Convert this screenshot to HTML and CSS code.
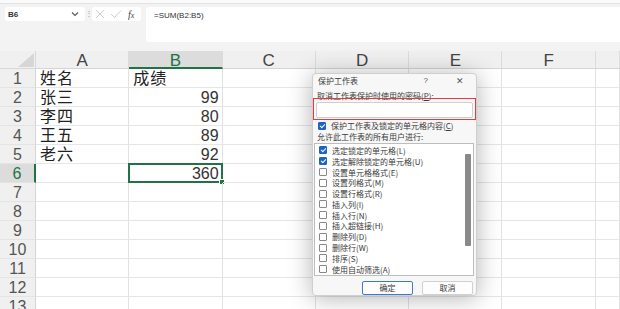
FILE: index.html
```html
<!DOCTYPE html>
<html lang="zh-CN">
<head>
    <meta charset="utf-8">
    <title>保护工作表</title>
    <link rel="stylesheet" href="styles.css">
</head>
<body>
    <div class="ribbon-edge"></div>
    <div class="formula-bar">
        <div class="name-box">
            <span>B6</span>
            <svg width="8" height="6" viewBox="0 0 8 6"><path d="M1 1.5 L4 4.5 L7 1.5" fill="none" stroke="#555" stroke-width="1.1"/></svg>
        </div>
        <div class="dots">⋮</div>
        <div class="fx-box">
            <svg width="10" height="10" viewBox="0 0 10 10"><path d="M1 1 L9 9 M9 1 L1 9" stroke="#c8c8c8" stroke-width="0.9"/></svg>
            <svg width="12" height="10" viewBox="0 0 12 10"><path d="M1 5 L4.5 8.5 L11 1.5" fill="none" stroke="#c8c8c8" stroke-width="0.9"/></svg>
            <span class="fx"><i>f</i><i>x</i></span>
        </div>
        <div class="formula-input">=SUM(B2:B5)</div>
    </div>

    <div class="sheet">
        <div class="corner"><svg width="30" height="14" viewBox="0 0 30 14"><path d="M30 0 L30 14 L14 14 Z" fill="#d6d6d6"/></svg></div>
        <div class="col-head">A</div>
        <div class="col-head active">B</div>
        <div class="col-head">C</div>
        <div class="col-head">D</div>
        <div class="col-head">E</div>
        <div class="col-head">F</div>
        <div class="col-head"></div>

        <div class="row-head">1</div>
        <div class="cell">姓名</div><div class="cell">成绩</div><div class="cell"></div><div class="cell"></div><div class="cell"></div><div class="cell"></div><div class="cell"></div>
        <div class="row-head">2</div>
        <div class="cell">张三</div><div class="cell num">99</div><div class="cell"></div><div class="cell"></div><div class="cell"></div><div class="cell"></div><div class="cell"></div>
        <div class="row-head">3</div>
        <div class="cell">李四</div><div class="cell num">80</div><div class="cell"></div><div class="cell"></div><div class="cell"></div><div class="cell"></div><div class="cell"></div>
        <div class="row-head">4</div>
        <div class="cell">王五</div><div class="cell num">89</div><div class="cell"></div><div class="cell"></div><div class="cell"></div><div class="cell"></div><div class="cell"></div>
        <div class="row-head">5</div>
        <div class="cell">老六</div><div class="cell num">92</div><div class="cell"></div><div class="cell"></div><div class="cell"></div><div class="cell"></div><div class="cell"></div>
        <div class="row-head active">6</div>
        <div class="cell"></div><div class="cell num selected">360<span class="handle"></span></div><div class="cell"></div><div class="cell"></div><div class="cell"></div><div class="cell"></div><div class="cell"></div>
        <div class="row-head">7</div>
        <div class="cell"></div><div class="cell"></div><div class="cell"></div><div class="cell"></div><div class="cell"></div><div class="cell"></div><div class="cell"></div>
        <div class="row-head">8</div>
        <div class="cell"></div><div class="cell"></div><div class="cell"></div><div class="cell"></div><div class="cell"></div><div class="cell"></div><div class="cell"></div>
        <div class="row-head">9</div>
        <div class="cell"></div><div class="cell"></div><div class="cell"></div><div class="cell"></div><div class="cell"></div><div class="cell"></div><div class="cell"></div>
        <div class="row-head">10</div>
        <div class="cell"></div><div class="cell"></div><div class="cell"></div><div class="cell"></div><div class="cell"></div><div class="cell"></div><div class="cell"></div>
        <div class="row-head">11</div>
        <div class="cell"></div><div class="cell"></div><div class="cell"></div><div class="cell"></div><div class="cell"></div><div class="cell"></div><div class="cell"></div>
        <div class="row-head">12</div>
        <div class="cell"></div><div class="cell"></div><div class="cell"></div><div class="cell"></div><div class="cell"></div><div class="cell"></div><div class="cell"></div>
        <div class="row-head">13</div>
        <div class="cell"></div><div class="cell"></div><div class="cell"></div><div class="cell"></div><div class="cell"></div><div class="cell"></div><div class="cell"></div>
    </div>

    <div class="dialog">
        <div class="dialog-title">
            <span>保护工作表</span>
            <span class="title-btns"><span>?</span><span class="close">✕</span></span>
        </div>
        <div class="label">取消工作表保护时使用的密码(<u>P</u>):</div>
        <div class="password"></div>
        <div class="check-row"><span class="box checked"></span>保护工作表及锁定的单元格内容(<u>C</u>)</div>
        <div class="label">允许此工作表的所有用户进行:</div>
        <div class="list">
            <div class="items">
                <div class="item"><span class="box checked"></span>选定锁定的单元格(L)</div>
                <div class="item"><span class="box checked"></span>选定解除锁定的单元格(U)</div>
                <div class="item"><span class="box"></span>设置单元格格式(E)</div>
                <div class="item"><span class="box"></span>设置列格式(M)</div>
                <div class="item"><span class="box"></span>设置行格式(R)</div>
                <div class="item"><span class="box"></span>插入列(I)</div>
                <div class="item"><span class="box"></span>插入行(N)</div>
                <div class="item"><span class="box"></span>插入超链接(H)</div>
                <div class="item"><span class="box"></span>删除列(D)</div>
                <div class="item"><span class="box"></span>删除行(W)</div>
                <div class="item"><span class="box"></span>排序(S)</div>
                <div class="item"><span class="box"></span>使用自动筛选(A)</div>
                <div class="item"><span class="box"></span>使用数据透视表和数据透视图(P)</div>
            </div>
            <div class="scroll"><div class="thumb"></div></div>
        </div>
        <div class="buttons">
            <div class="btn primary">确定</div>
            <div class="btn">取消</div>
        </div>
        <div class="highlight"></div>
    </div>
</body>
</html>
```

FILE: styles.css
```css
body {
    margin: 0;
    width: 620px;
    height: 309px;
    overflow: hidden;
    background-color: #f3f3f3;
    font-family: "Liberation Sans", "Noto Sans CJK SC", sans-serif;
    color: #222;
    position: relative;
}
.ribbon-edge {
    height: 3px;
    background: #fafafa;
    border-bottom: 1px solid #e2e2e2;
}
.formula-bar {
    display: flex;
    align-items: flex-start;
    height: 39px;
    padding-top: 3px;
    padding-left: 5px;
}
.name-box {
    width: 80px;
    height: 14px;
    box-sizing: border-box;
    background: #fff;
    border-radius: 3px;
    display: flex;
    align-items: center;
    justify-content: space-between;
    padding: 0 6px 0 3px;
    font-size: 8px;
    font-weight: bold;
    color: #333;
}
.dots {
    width: 7px;
    font-size: 8px;
    line-height: 14px;
    color: #999;
    text-align: center;
}
.fx-box {
    width: 49px;
    height: 14px;
    box-sizing: border-box;
    background: #fff;
    border-radius: 3px;
    display: flex;
    align-items: center;
    gap: 5px;
    padding-left: 3px;
}
.fx {
    font-family: "Liberation Serif", serif;
    font-size: 10px;
    color: #444;
    margin-left: 1px;
}
.fx i + i {
    font-size: 8px;
}
.formula-input {
    flex: 1;
    height: 35px;
    margin-left: 5px;
    background: #fff;
    border-radius: 3px 0 0 3px;
    font-size: 8px;
    padding: 4px 0 0 8px;
    box-sizing: border-box;
    color: #333;
}
.sheet {
    display: grid;
    grid-template-columns: 36px repeat(6, 93.3px) 1fr;
    grid-template-rows: 18px;
    grid-auto-rows: 19px;
    margin-top: 5px;
    background: #fff;
}
.corner {
    background: #f0f0f0;
    border-right: 1px solid #d8d8d8;
    border-bottom: 1px solid #d8d8d8;
    display: flex;
    align-items: flex-end;
    justify-content: flex-end;
    padding: 0 1px 1px 0;
}
.col-head {
    background: #f0f0f0;
    border-right: 1px solid #dcdcdc;
    border-bottom: 1px solid #d4d4d4;
    text-align: center;
    font-size: 17px;
    line-height: 20px;
    color: #444;
}
.col-head.active {
    background: #dcdcdc;
    color: #217346;
    border-bottom: 2px solid #217346;
}
.row-head {
    background: #f0f0f0;
    border-right: 1px solid #d4d4d4;
    border-bottom: 1px solid #e4e4e4;
    text-align: center;
    font-size: 16px;
    line-height: 19px;
    color: #555;
}
.row-head.active {
    background: #dcdcdc;
    color: #217346;
    border-right: 2px solid #217346;
}
.cell {
    border-right: 1px solid #e2e2e2;
    border-bottom: 1px solid #e6e6e6;
    font-size: 16px;
    line-height: 19px;
    padding: 0 3px 0 4px;
    letter-spacing: 1px;
    color: #222;
    position: relative;
    min-width: 0;
}
.cell.num {
    text-align: right;
    letter-spacing: 0;
    color: #333;
}
.cell.selected {
    border: 1px solid #217346;
    margin: -1px 0 0 -1px;
    box-shadow: inset 0 0 0 1px #217346;
}
.handle {
    position: absolute;
    right: -3px;
    bottom: -3px;
    width: 4px;
    height: 4px;
    background: #217346;
    border: 1px solid #fff;
}
.dialog {
    position: absolute;
    left: 312px;
    top: 73px;
    width: 165px;
    height: 223px;
    box-sizing: border-box;
    background: #f7f7f7;
    border: 1px solid #cfcfcf;
    border-radius: 4px;
    box-shadow: 0 2px 24px rgba(0, 0, 0, 0.3);
    padding: 0 3px 0 4px;
    font-family: "Noto Sans CJK SC", "Liberation Sans", sans-serif;
    font-size: 8px;
    color: #3a3a3a;
}
.dialog-title {
    display: flex;
    justify-content: space-between;
    height: 16px;
    line-height: 14px;
    padding: 0 9px 0 1px;
}
.title-btns {
    display: flex;
    gap: 28px;
    font-family: "Liberation Sans", sans-serif;
    color: #555;
}
.close {
    font-size: 9px;
}
.label {
    line-height: 11px;
    height: 11px;
}
.password {
    height: 14px;
    margin: 1px 0 0 -1px;
    background: #fff;
    border: 1px solid #cfcfcf;
    border-radius: 2px;
}
.check-row {
    display: flex;
    align-items: center;
    height: 11px;
    margin-top: 2px;
    padding-left: 1px;
}
.box {
    width: 6px;
    height: 6px;
    border: 1px solid #888;
    border-radius: 1px;
    background: #fff;
    margin-right: 5px;
    flex: none;
    position: relative;
}
.box.checked {
    background: #1b64c8;
    border-color: #1b64c8;
}
.box.checked::after {
    content: "";
    position: absolute;
    left: 1.5px;
    top: 0;
    width: 2px;
    height: 4px;
    border: solid #fff;
    border-width: 0 1px 1px 0;
    transform: rotate(45deg);
}
.list {
    display: flex;
    height: 133px;
    margin: 1px 0 0 -3px;
    width: 160px;
    box-sizing: border-box;
    background: #fff;
    border: 1px solid #bdbdbd;
    overflow: hidden;
}
.items {
    flex: 1;
    padding: 1px 0 0 4px;
    overflow: hidden;
}
.item {
    display: flex;
    align-items: center;
    height: 10.8px;
    white-space: nowrap;
}
.scroll {
    width: 10px;
    padding: 10px 2px 0;
    box-sizing: border-box;
    flex: none;
}
.thumb {
    height: 92px;
    background: #8a8a8a;
    border-radius: 1px;
}
.buttons {
    display: flex;
    justify-content: flex-end;
    gap: 9px;
    margin-top: 5px;
}
.btn {
    width: 51px;
    height: 14px;
    box-sizing: border-box;
    background: #fdfdfd;
    border: 1px solid #d0d0d0;
    border-radius: 2px;
    text-align: center;
    line-height: 12px;
}
.btn.primary {
    border-color: #3b78d8;
}
.highlight {
    position: absolute;
    left: 0;
    top: 24px;
    width: 163px;
    height: 22px;
    box-sizing: border-box;
    border: 1.5px solid #e8393e;
}
```
